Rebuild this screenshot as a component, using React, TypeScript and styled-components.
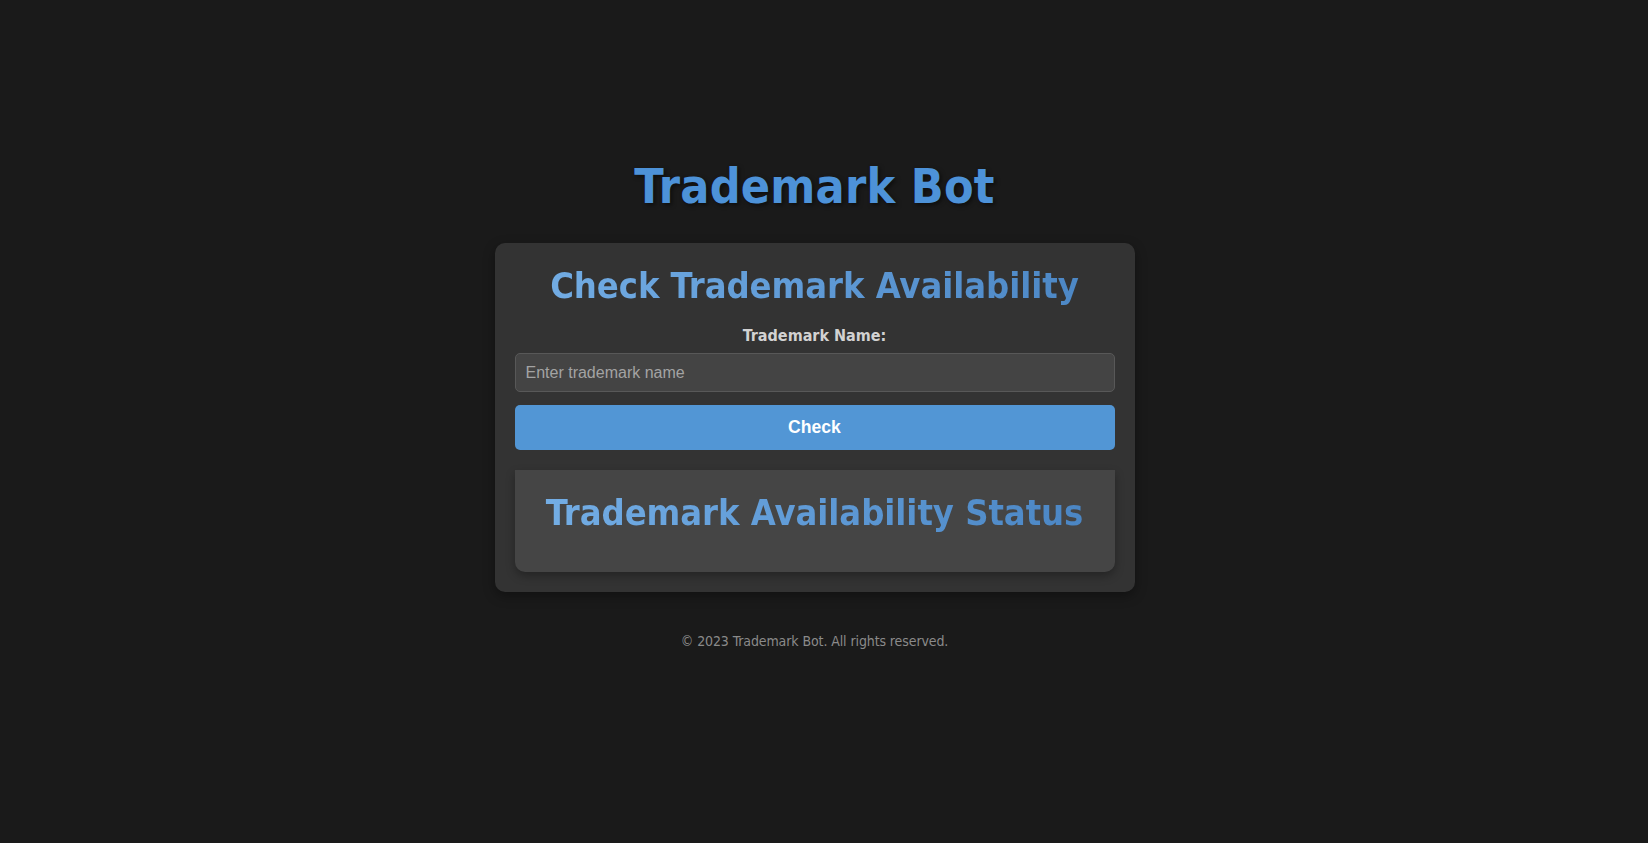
import React from "react";
import styled, { createGlobalStyle } from "styled-components";

const GlobalStyle = createGlobalStyle`
  html, body {
    margin: 0;
    padding: 0;
    background: #1a1a1a;
  }
  body {
    font-family: "DejaVu Sans Condensed", "DejaVu Sans", sans-serif;
    font-stretch: condensed;
  }
`;

const Page = styled.div`
  min-height: 100vh;
  box-sizing: border-box;
  padding: 158px 19px 0 0;
  display: flex;
  flex-direction: column;
  align-items: center;
`;

const Title = styled.h1`
  margin: 0 0 29px;
  font-family: "DejaVu Sans Condensed", "DejaVu Sans", sans-serif;
  font-stretch: condensed;
  font-weight: 700;
  font-size: 48px;
  line-height: 56px;
  letter-spacing: 0.25px;
  color: #4d92d8;
  text-shadow: 2px 2px 4px rgba(0, 0, 0, 0.5);
`;

const Card = styled.section`
  width: 600px;
  padding: 21px 20px 20px;
  background: #333333;
  border-radius: 10px;
  box-shadow: 0 4px 12px rgba(0, 0, 0, 0.35);
  display: flex;
  flex-direction: column;
`;

const GradientHeading = styled.h2<{ $gap: number }>`
  margin: 0 0 ${(p) => p.$gap}px;
  font-family: "DejaVu Sans Condensed", "DejaVu Sans", sans-serif;
  font-stretch: condensed;
  font-weight: 700;
  font-size: 36px;
  line-height: 44px;
  letter-spacing: -0.05px;
  text-align: center;
  background: linear-gradient(90deg, #74aee5 0%, #5f9ad6 50%, #4a85c3 100%);
  -webkit-background-clip: text;
  background-clip: text;
  color: transparent;
`;

const Form = styled.form`
  display: flex;
  flex-direction: column;
  margin: 0;
`;

const Label = styled.label`
  font-family: "DejaVu Sans Condensed", "DejaVu Sans", sans-serif;
  font-stretch: condensed;
  font-weight: 700;
  font-size: 16px;
  line-height: 20px;
  color: #d2d2d2;
  text-align: center;
  margin-bottom: 7px;
`;

const Input = styled.input`
  box-sizing: border-box;
  width: 100%;
  height: 39px;
  padding: 0 10px;
  background: #444444;
  border: 1px solid #585858;
  border-radius: 5px;
  color: #e0e0e0;
  font-family: "Liberation Sans", Arial, sans-serif;
  font-size: 16px;
  outline: none;
  &::placeholder {
    color: #a3a3a3;
  }
`;

const Button = styled.button`
  box-sizing: border-box;
  width: 100%;
  height: 45px;
  margin-top: 13px;
  border: none;
  border-radius: 5px;
  background: #5296d5;
  color: #ffffff;
  font-family: "Liberation Sans", Arial, sans-serif;
  font-weight: 700;
  font-size: 17.6px;
  cursor: pointer;
`;

const StatusBox = styled.div`
  margin-top: 20px;
  padding: 21px 20px 37px;
  background: #454545;
  border-radius: 0 0 10px 10px;
  box-shadow: 0 4px 10px rgba(0, 0, 0, 0.3);
`;

const Footer = styled.footer`
  margin-top: 41px;
  font-family: "DejaVu Sans Condensed", "DejaVu Sans", sans-serif;
  font-stretch: condensed;
  font-size: 14px;
  line-height: 17px;
  letter-spacing: -0.1px;
  color: #8a8a8a;
`;

export default function App() {
  return (
    <>
      <GlobalStyle />
      <Page>
        <Title>Trademark Bot</Title>
        <Card>
          <GradientHeading $gap={18}>Check Trademark Availability</GradientHeading>
          <Form onSubmit={(e) => e.preventDefault()}>
            <Label htmlFor="tm">Trademark Name:</Label>
            <Input id="tm" type="text" placeholder="Enter trademark name" />
            <Button type="submit">Check</Button>
          </Form>
          <StatusBox>
            <GradientHeading $gap={0}>Trademark Availability Status</GradientHeading>
          </StatusBox>
        </Card>
        <Footer>© 2023 Trademark Bot. All rights reserved.</Footer>
      </Page>
    </>
  );
}
